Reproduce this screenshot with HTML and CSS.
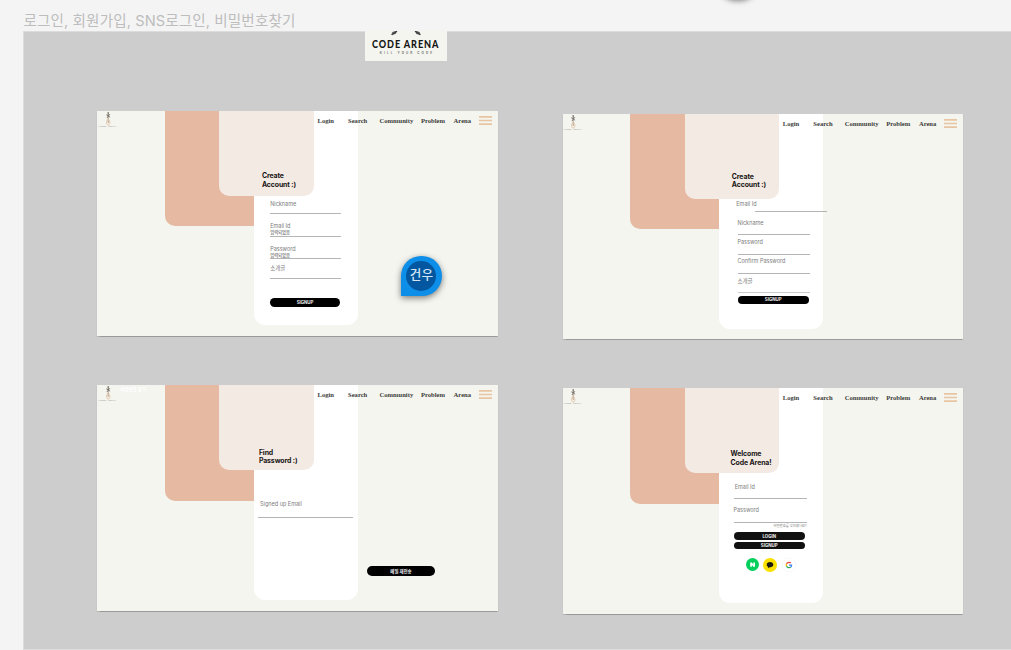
FILE: index.html
```html
<!DOCTYPE html>
<html lang="ko">
<head>
<meta charset="utf-8">
<title>Code Arena</title>
<link rel="stylesheet" href="styles.css">
</head>
<body>
<svg class="defs" aria-hidden="true">
  <symbol id="mark" viewBox="0 0 18 18">
    <path d="M9.200 2v11" stroke="#a89a8a" stroke-width=".9" fill="none"/>
    <path d="M7.300 4.800l3.800 2.400M10.900 4.200L7.900 8M9.200 2v4" stroke="#77706a" stroke-width=".9" fill="none"/>
    <path d="M9.200 9c-2.200 2.200-2.200 5.400 0 6.200 2.200-.8 2.200-4 0-6.200z" stroke="#e2bd9c" stroke-width=".9" fill="none"/>
  </symbol>
  <symbol id="burger" viewBox="0 0 13 9">
    <path d="M0 .9h13M0 4.500h13M0 8.100h13" stroke="#e8c5a2" stroke-width="1.600"/>
  </symbol>
</svg>
<main class="canvas">
  <h1 class="section-title">로그인, 회원가입, SNS로그인, 비밀번호찾기</h1>
  <div class="drag-shadow"></div>
  <section class="section">
    <div class="brand">
      <svg class="laurel" viewBox="0 0 82 5"><path d="M26 4l1.500-3 3-1h2l-2 3zM56 4l-1.500-3-3-1h-2l2 3z" fill="#555"/><path d="M27 4l5-4M55 4l-5-4" stroke="#333" stroke-width=".8"/></svg>
      <strong class="brand-name">CODE ARENA</strong>
      <span class="brand-tag">KILL YOUR CODE</span>
    </div>
  </section>

  <article class="frame frame-signup">
    <div class="peach"></div><div class="sheet"></div><div class="blush"></div>
    <div class="logo"><svg class="mark"><use href="#mark"/></svg><span class="logo-name">CODE ARENA</span></div>
    <nav class="nav"><a>Login</a><a>Search</a><a>Community</a><a>Problem</a><a>Arena</a><svg class="burger"><use href="#burger"/></svg></nav>
    <h2 class="title">Create<br>Account :)</h2>
    <form class="form">
      <div class="field"><label>Nickname</label></div>
      <div class="field"><label>Email Id</label><span class="value">입력되었음</span></div>
      <div class="field"><label>Password</label><span class="value">입력되었음</span></div>
      <div class="field"><label>소개글</label></div>
      <div class="button">SIGNUP</div>
    </form>
  </article>

  <article class="frame frame-confirm">
    <div class="peach"></div><div class="sheet"></div><div class="blush"></div>
    <div class="logo"><svg class="mark"><use href="#mark"/></svg><span class="logo-name">CODE ARENA</span></div>
    <nav class="nav"><a>Login</a><a>Search</a><a>Community</a><a>Problem</a><a>Arena</a><svg class="burger"><use href="#burger"/></svg></nav>
    <h2 class="title">Create<br>Account :)</h2>
    <form class="form">
      <div class="field"><label>Email Id</label></div>
      <div class="field"><label>Nickname</label></div>
      <div class="field"><label>Password</label></div>
      <div class="field"><label>Confirm Password</label></div>
      <div class="field"><label>소개글</label></div>
      <div class="button">SIGNUP</div>
    </form>
  </article>

  <article class="frame frame-find">
    <div class="peach"></div><div class="sheet"></div><div class="blush"></div>
    <div class="logo"><svg class="mark"><use href="#mark"/></svg><span class="logo-name">CODE ARENA</span></div>
    <span class="ghost">비밀번호 찾기</span>
    <nav class="nav"><a>Login</a><a>Search</a><a>Community</a><a>Problem</a><a>Arena</a><svg class="burger"><use href="#burger"/></svg></nav>
    <h2 class="title">Find<br>Password :)</h2>
    <form class="form">
      <div class="field"><label>Signed up Email</label></div>
      <div class="button">메일 재전송</div>
    </form>
  </article>

  <article class="frame frame-login">
    <div class="peach"></div><div class="sheet"></div><div class="blush"></div>
    <div class="logo"><svg class="mark"><use href="#mark"/></svg><span class="logo-name">CODE ARENA</span></div>
    <nav class="nav"><a>Login</a><a>Search</a><a>Community</a><a>Problem</a><a>Arena</a><svg class="burger"><use href="#burger"/></svg></nav>
    <h2 class="title">Welcome<br>Code Arena!</h2>
    <form class="form">
      <div class="field"><label>Email Id</label></div>
      <div class="field"><label>Password</label></div>
      <span class="forgot">비밀번호를 잊으셨나요?</span>
      <div class="button">LOGIN</div>
      <div class="button">SIGNUP</div>
      <div class="social">
        <svg class="naver" viewBox="0 0 13 13"><circle cx="6.500" cy="6.500" r="6.500" fill="#03cf5d"/><path d="M4.200 4.400h1.700l1.400 2V4.400h1.700v4.400H7.300l-1.400-2v2H4.200z" fill="#fff"/></svg>
        <svg class="kakao" viewBox="0 0 14 14"><circle cx="7" cy="7" r="7" fill="#fae100"/><path d="M7 4.100c-1.900 0-3.300 1.100-3.300 2.600 0 1 .6 1.700 1.500 2.200L5 10.200l1.700-1C8.900 9.300 10.300 8.200 10.300 6.700S8.900 4.100 7 4.100z" fill="#1d1a10"/></svg>
        <svg class="google" viewBox="0 0 48 48"><circle cx="24" cy="24" r="23" fill="#fff" stroke="#f3f3f3" stroke-width="2"/><g transform="translate(12.500 12.500) scale(.48)"><path fill="#EA4335" d="M24 9.500c3.540 0 6.710 1.220 9.210 3.600l6.850-6.850C35.900 2.380 30.470 0 24 0 14.620 0 6.510 5.380 2.560 13.220l7.980 6.190C12.430 13.720 17.740 9.500 24 9.500z"/><path fill="#4285F4" d="M46.980 24.550c0-1.570-.15-3.090-.38-4.550H24v9.020h12.940c-.58 2.960-2.260 5.480-4.780 7.180l7.730 6c4.510-4.180 7.090-10.360 7.090-17.650z"/><path fill="#FBBC05" d="M10.530 28.590c-.48-1.450-.76-2.990-.76-4.590s.27-3.140.76-4.590l-7.980-6.190C.92 16.460 0 20.120 0 24c0 3.880.92 7.540 2.560 10.780l7.970-6.190z"/><path fill="#34A853" d="M24 48c6.480 0 11.930-2.130 15.890-5.810l-7.730-6c-2.150 1.450-4.920 2.300-8.160 2.300-6.260 0-11.570-4.220-13.470-9.910l-7.980 6.190C6.510 42.620 14.620 48 24 48z"/></g></svg>
      </div>
    </form>
  </article>

  <div class="pin"><span class="avatar">건우</span></div>
</main>
</body>
</html>
```
FILE: styles.css
```css
* { box-sizing: border-box; }
body { margin: 0; background: #f4f4f4; font-family: Inter, "Noto Sans CJK KR", sans-serif; }
.defs { position: absolute; width: 0; height: 0; }
.canvas { position: relative; width: 1011px; height: 650px; overflow: hidden; }
.section-title { margin: 0; padding: 11px 0 0 23.5px; height: 31px; font-size: 14.6px; line-height: 20px; font-weight: 400; letter-spacing: .1px; color: #bdbdbd; white-space: nowrap; }
.drag-shadow { position: absolute; left: 719px; top: -38px; width: 38px; height: 37px; border-radius: 45%; box-shadow: 0 1px 6px rgba(0,0,0,.6); }
.section { margin-left: 23px; height: 619px; padding-left: 341px; background: #cdcdcd; border: solid #dcdcdc; border-width: 1px 0 1px 1px; }

.brand { display: flex; flex-direction: column; align-items: center; width: 82px; height: 30px; margin-top: -1px; background: #f4f5ef; }
.laurel { width: 82px; height: 5px; }
.brand-name { margin-top: 2px; font: 900 11px/12px Lato, sans-serif; letter-spacing: 1.1px; color: #151515; white-space: nowrap; transform: scaleX(.83); }
.brand-tag { margin-top: 1px; font: 700 3px/4px Inter, sans-serif; letter-spacing: 2.1px; color: #777; white-space: nowrap; padding-left: 2px; }

/* Artboards on the free canvas */
.frame { position: absolute; width: 400.4px; height: 225.500px; overflow: hidden; background: #f4f5ef; box-shadow: 0 .5px 1px rgba(0,0,0,.25); }
.frame-signup { left: 97.200px; top: 110.700px; }
.frame-confirm { left: 562.500px; top: 113.800px; }
.frame-find { left: 97.200px; top: 385.200px; }
.frame-login { left: 562.500px; top: 388px; }

/* Overlapping background shapes */
.peach, .sheet, .blush { position: absolute; top: 0; }
.peach { left: 67.400px; width: 120px; height: 115.500px; border-radius: 0 0 0 10px; background: #e6b9a3; }
.sheet { left: 156.800px; width: 104px; height: 214.800px; border-radius: 0 0 11px 11px; background: #fff; }
.blush { left: 122.300px; width: 94.500px; height: 85.300px; border-radius: 0 0 10px 10px; background: #f4eae4; }

.logo { position: absolute; left: 1px; top: 0; width: 19px; display: flex; flex-direction: column; align-items: center; }
.mark { width: 18px; height: 18px; margin-top: -1px; }
.logo-name { font: 2.800px/3px "Liberation Serif", serif; color: #77726a; white-space: nowrap; margin-top: -3px; }
.ghost { position: absolute; left: 23px; top: 2px; font-size: 4.500px; line-height: 6px; font-weight: 700; color: #fff; }

.nav { position: absolute; left: 220.300px; top: 4px; display: grid; grid-template-columns: 30.500px 31.500px 41.400px 32.700px 25.400px 13px; align-items: center; height: 11px; font: 700 6.600px/11px "Liberation Serif", serif; color: #3d3d3b; }
.burger { width: 13px; height: 9px; }

.title { position: absolute; margin: 0; font-size: 6.900px; line-height: 8.200px; font-weight: 700; letter-spacing: -.08px; color: #161313; white-space: nowrap; }
.form { position: absolute; display: flex; flex-direction: column; }
.field { display: flex; flex-direction: column; flex: none; border-bottom: 1px solid #b5b5b5; font-size: 5.500px; line-height: 7px; color: #7c7c7c; white-space: nowrap; }
.field label { height: 7px; }
.value { font-size: 4.300px; line-height: 6px; color: #333; }
.button { display: flex; align-items: center; justify-content: center; flex: none; border-radius: 5px; background: #000; color: #eee; font-size: 4.400px; font-weight: 700; line-height: 5px; }

.frame-signup .title { left: 164.700px; top: 61.800px; }
.frame-signup .form { left: 173px; top: 90.300px; width: 71.200px; }
.frame-signup .field { height: 13.500px; margin-bottom: 8.900px; }
.frame-signup .field:nth-child(2) { margin-bottom: 8.700px; }
.frame-signup .field:nth-child(3) { margin-bottom: 6px; }
.frame-signup .field:nth-child(4) { margin-bottom: 19.100px; height: 14px; }
.frame-signup .button { width: 69.700px; height: 8.700px; }

.frame-confirm .title { left: 169.300px; top: 59.400px; }
.frame-confirm .form { left: 175px; top: 87px; width: 72.800px; }
.frame-confirm .field { height: 16.200px; margin-bottom: 3.300px; }
.frame-confirm .field:nth-child(1) { height: 11.500px; margin: 0 -17.200px 7.500px 17.200px; }
.frame-confirm .field:nth-child(1) label { margin-left: -18.400px; }
.frame-confirm .field:nth-child(2) { height: 15.600px; }
.frame-confirm .field:nth-child(5) { height: 15px; border-color: #cbcbcb; }
.frame-confirm .button { width: 71.500px; height: 7.900px; }

.frame-find .title { left: 161.700px; top: 63.400px; }
.frame-find .form { left: 161.300px; top: 115.900px; width: 95px; }
.frame-find .field { height: 17px; padding-left: 1.600px; }
.frame-find .button { margin: 48.400px 0 0 108.500px; width: 68px; height: 9.200px; }

.frame-login .title { left: 168px; top: 62.300px; }
.frame-login .form { left: 171px; top: 96px; width: 73px; }
.frame-login .field { height: 15px; }
.frame-login .field:nth-child(1) { padding-left: 1.200px; }
.frame-login .field:nth-child(2) { margin-top: 8.100px; height: 15.500px; }
.forgot { align-self: flex-end; margin-top: 1px; height: 5px; font-size: 3.300px; line-height: 5px; color: #777; white-space: nowrap; }
.frame-login .button { width: 71.500px; height: 7.600px; margin-top: 3.700px; background: #111; }
.frame-login .button + .button { margin-top: 2px; }
.social { display: flex; align-items: center; gap: 4.400px; margin: 8.400px 0 0 12.600px; }
.social svg { width: 14px; height: 14px; }
.social .naver { width: 13px; height: 13px; }

/* Comment pin */
.pin { position: absolute; left: 401.200px; top: 255.700px; width: 40.500px; height: 40.500px; display: grid; place-items: center; border-radius: 50% 50% 50% 0; background: #0d8ee9; box-shadow: 0 2px 6px rgba(0,0,0,.5); }
.avatar { display: grid; place-items: center; width: 30px; height: 30px; border-radius: 50%; background: #0357a0; color: #d3e5f4; font-size: 12.600px; font-weight: 500; line-height: 16px; padding-bottom: 1px; }
```
